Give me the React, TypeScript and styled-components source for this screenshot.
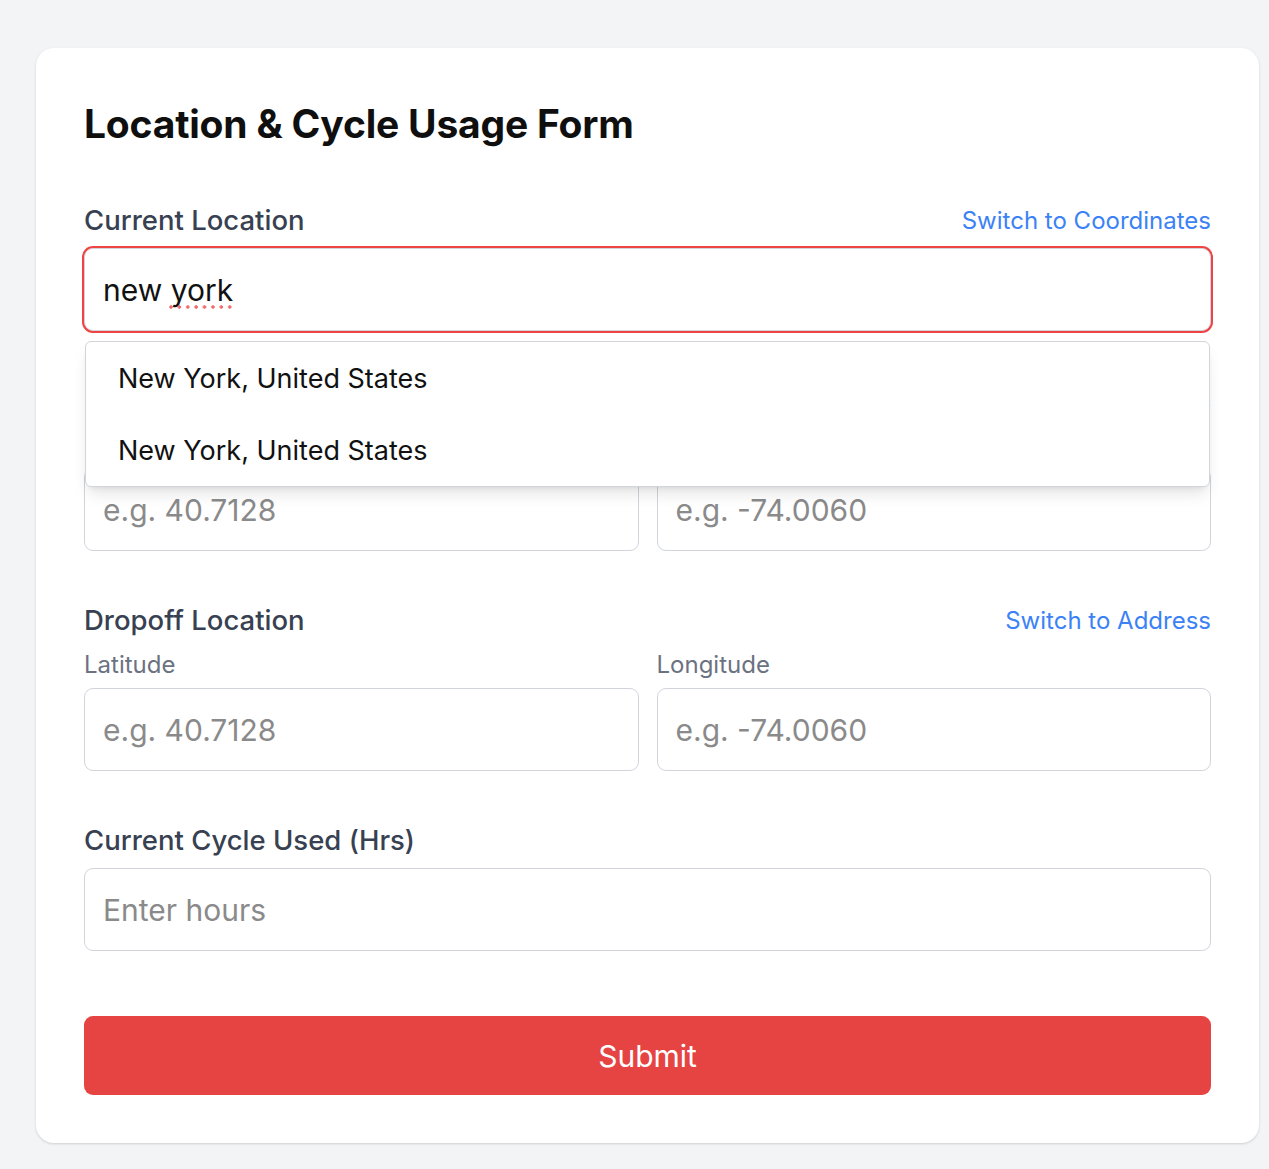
import React from "react";
import styled, { createGlobalStyle } from "styled-components";

const Global = createGlobalStyle`
  html, body { margin: 0; padding: 0; }
  body {
    background: #f3f4f6;
    font-family: Inter, "Noto Sans", Roboto, sans-serif;
    -webkit-font-smoothing: antialiased;
  }
  * { box-sizing: border-box; }
`;

const Page = styled.div`
  min-height: 1169px;
  padding: 48px 10px 0 36px;
`;

const Card = styled.form`
  width: 1223px;
  background: #ffffff;
  border-radius: 18px;
  box-shadow: 0 1px 3px rgba(0, 0, 0, 0.1), 0 1px 2px rgba(0, 0, 0, 0.06);
  padding: 48px;
  display: flex;
  flex-direction: column;
`;

const Title = styled.h1`
  margin: 0 0 50px;
  font-size: 39px;
  line-height: 56px;
  font-weight: 700;
  color: #0f0f0f;
  letter-spacing: -0.2px;
`;

const Section = styled.div<{ $gap?: number }>`
  position: relative;
  display: flex;
  flex-direction: column;
  margin-bottom: ${(p) => p.$gap ?? 51}px;
`;

const LabelRow = styled.div`
  display: flex;
  justify-content: space-between;
  align-items: center;
  height: 36px;
  margin-bottom: 10px;
`;

const Label = styled.label`
  font-size: 27.5px;
  font-weight: 500;
  color: #374151;
`;

const SwitchLink = styled.button`
  border: none;
  background: none;
  padding: 0;
  font-family: inherit;
  font-size: 24px;
  color: #3b82f6;
  cursor: pointer;
`;

const CoordGrid = styled.div`
  display: grid;
  grid-template-columns: 1fr 1fr;
  column-gap: 18px;
`;

const Field = styled.div`
  display: flex;
  flex-direction: column;
`;

const SubLabel = styled.label`
  font-size: 24px;
  line-height: 34px;
  color: #6b7280;
  margin-bottom: 6px;
`;

const Input = styled.input<{ $active?: boolean }>`
  width: 100%;
  height: 83px;
  padding: 0 18px;
  font-family: inherit;
  font-size: 30px;
  color: #111111;
  background: #ffffff;
  border: 1.5px solid #d1d5db;
  box-shadow: ${(p) => (p.$active ? "0 0 0 2px #ef4444" : "none")};
  border-radius: 9px;
  outline: none;
  &::placeholder { color: #8a8a8a; }
`;

const SpellMark = styled.span`
  position: absolute;
  left: 85px;
  top: 103px;
  width: 66px;
  height: 4px;
  background: radial-gradient(circle at 2px 2px, #f26d6d 1.5px, transparent 1.9px) repeat-x;
  background-size: 8.4px 4px;
  pointer-events: none;
`;

const Dropdown = styled.ul`
  position: absolute;
  left: 1px;
  right: 1px;
  top: 139px;
  margin: 0;
  padding: 0;
  list-style: none;
  background: #ffffff;
  border: 1.5px solid #d1d5db;
  border-radius: 6px;
  box-shadow: 0 10px 15px -3px rgba(0, 0, 0, 0.1), 0 4px 6px -4px rgba(0, 0, 0, 0.1);
  z-index: 10;
`;

const Option = styled.li`
  height: 72px;
  display: flex;
  align-items: center;
  padding: 0 32px;
  font-size: 27px;
  color: #111111;
  cursor: pointer;
`;

const SubmitButton = styled.button`
  margin-top: 14px;
  height: 79px;
  border: none;
  border-radius: 9px;
  background: #e64442;
  color: #ffffff;
  font-family: inherit;
  font-size: 30px;
  font-weight: 400;
  cursor: pointer;
`;

function CoordInputs() {
  return (
    <CoordGrid>
      <Field>
        <SubLabel>Latitude</SubLabel>
        <Input placeholder="e.g. 40.7128" />
      </Field>
      <Field>
        <SubLabel>Longitude</SubLabel>
        <Input placeholder="e.g. -74.0060" />
      </Field>
    </CoordGrid>
  );
}

export default function App() {
  return (
    <>
      <Global />
      <Page>
        <Card onSubmit={(e) => e.preventDefault()}>
          <Title>Location &amp; Cycle Usage Form</Title>

          <Section>
            <LabelRow>
              <Label>Current Location</Label>
              <SwitchLink type="button">Switch to Coordinates</SwitchLink>
            </LabelRow>
            <Input $active defaultValue="new york" spellCheck={false} />
            <SpellMark />
            <Dropdown>
              <Option>New York, United States</Option>
              <Option>New York, United States</Option>
            </Dropdown>
          </Section>

          <Section>
            <LabelRow>
              <Label>Pickup Location</Label>
              <SwitchLink type="button">Switch to Address</SwitchLink>
            </LabelRow>
            <CoordInputs />
          </Section>

          <Section>
            <LabelRow>
              <Label>Dropoff Location</Label>
              <SwitchLink type="button">Switch to Address</SwitchLink>
            </LabelRow>
            <CoordInputs />
          </Section>

          <Section $gap={51}>
            <LabelRow>
              <Label>Current Cycle Used (Hrs)</Label>
            </LabelRow>
            <Input placeholder="Enter hours" />
          </Section>

          <SubmitButton type="submit">Submit</SubmitButton>
        </Card>
      </Page>
    </>
  );
}
